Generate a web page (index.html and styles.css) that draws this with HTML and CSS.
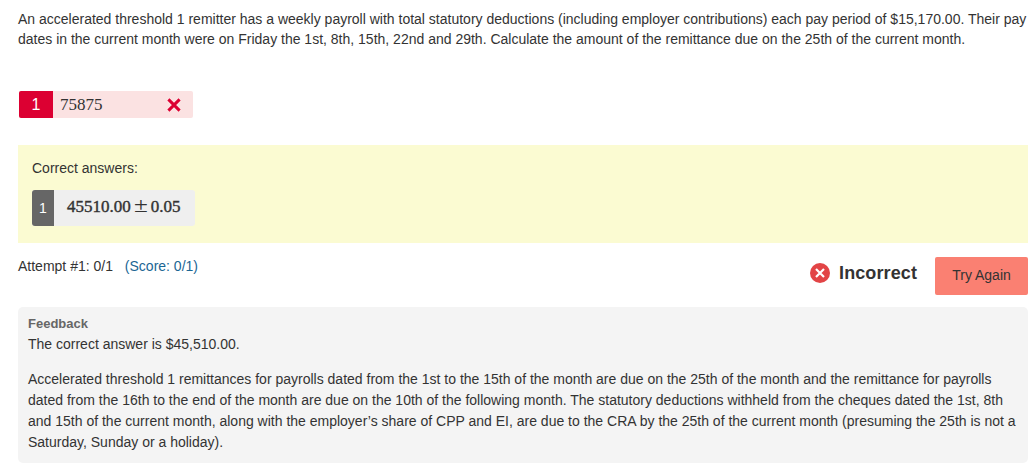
FILE: index.html
```html
<!DOCTYPE html>
<html lang="en">
<head>
  <meta charset="UTF-8" />
  <meta name="viewport" content="width=device-width, initial-scale=1.0"/>
  <title>Payroll Remittance Question</title>
  <link rel="stylesheet" href="styles.css">
</head>
<body>

  <div class="question">
    <p class="question-text">
      <span class="line">An accelerated threshold 1 remitter has a weekly payroll with total statutory deductions (including employer contributions) each pay period of $15,170.00. Their pay</span>
      <span class="line">dates in the current month were on Friday the 1st, 8th, 15th, 22nd and 29th. Calculate the amount of the remittance due on the 25th of the current month.</span>
    </p>

    <div class="response">
      <span class="response-number">1</span>
      <span class="response-value">75875</span>
      <svg class="cross" width="14" height="14" viewBox="0 0 14 14">
        <path d="M1.4 1.4L12.6 12.6M12.6 1.4L1.4 12.6" />
      </svg>
    </div>

    <div class="correct-answers">
      <div class="correct-title">Correct answers:</div>
      <div class="correct">
        <span class="correct-number">1</span>
        <span class="correct-value">45510.00<span class="plus-minus">±</span>0.05</span>
      </div>
    </div>

    <div class="result">
      <div class="attempt">Attempt #1: 0/1 <a class="score" href="#">(Score: 0/1)</a></div>
      <div class="grade">
        <svg class="grade-icon" width="20" height="20" viewBox="0 0 20 20">
          <circle cx="10" cy="10" r="10" />
          <path d="M6 6L14 14M14 6L6 14" />
        </svg>
        <span class="grade-text">Incorrect</span>
        <button type="button" class="try-again">Try Again</button>
      </div>
    </div>

    <div class="feedback">
      <h3>Feedback</h3>
      <p>The correct answer is $45,510.00.</p>
      <p>
        <span class="line">Accelerated threshold 1 remittances for payrolls dated from the 1st to the 15th of the month are due on the 25th of the month and the remittance for payrolls</span>
        <span class="line">dated from the 16th to the end of the month are due on the 10th of the following month. The statutory deductions withheld from the cheques dated the 1st, 8th</span>
        <span class="line">and 15th of the current month, along with the employer’s share of CPP and EI, are due to the CRA by the 25th of the current month (presuming the 25th is not a</span>
        <span class="line">Saturday, Sunday or a holiday).</span>
      </p>
    </div>
  </div>

</body>
</html>
```

FILE: styles.css
```css
body {
  margin: 0;
  background: #fff;
  color: #333;
  font-family: "Liberation Sans", Arial, sans-serif;
  font-size: 14px;
  line-height: 21px;
}

.question {
  padding: 9px 8px 0 18px;
}

.line {
  display: block;
  white-space: nowrap;
}

.question-text {
  margin: 0 0 42px;
  line-height: 20px;
}

.response {
  display: flex;
  align-items: center;
  width: 174px;
  height: 27px;
  margin-left: 1px;
  background: #fbe2e2;
  border-radius: 2px;
  overflow: hidden;
}

.response-number {
  width: 34px;
  line-height: 27px;
  background: #dc0032;
  color: #fff;
  font-size: 16px;
  text-align: center;
}

.response-value {
  flex: 1;
  padding-left: 7px;
  font-family: "Liberation Serif", serif;
  font-size: 17px;
}

.cross {
  margin-right: 12px;
  fill: none;
  stroke: #dc0032;
  stroke-width: 3;
}

.correct-answers {
  height: 85px;
  margin-top: 27px;
  padding: 13px 14px 0;
  background: #fbfbd2;
}

.correct {
  display: flex;
  width: 163px;
  height: 36px;
  margin-top: 11px;
  line-height: 36px;
  background: #efefef;
  border-radius: 3px;
}

.correct-number {
  width: 22px;
  background: #666;
  color: #fff;
  text-align: center;
  border-radius: 3px 0 0 3px;
}

.correct-value {
  padding-left: 13px;
  font-family: "Liberation Serif", serif;
  font-size: 17px;
  line-height: 34px;
  -webkit-text-stroke: 0.4px #333;
}

.plus-minus {
  display: inline-block;
  width: 20px;
  font-size: 21px;
  line-height: 20px;
  text-align: center;
  transform: scaleX(1.2);
  -webkit-text-stroke: 0;
}

.result {
  display: flex;
  justify-content: space-between;
  height: 64px;
  padding-top: 13px;
  box-sizing: border-box;
}

.score {
  margin-left: 8px;
  color: #1b6694;
  text-decoration: none;
}

.grade {
  display: flex;
  align-items: flex-start;
}

.grade-icon {
  margin-top: 7px;
  fill: #e24446;
}

.grade-icon path {
  stroke: #fff;
  stroke-width: 2.2;
}

.grade-text {
  margin: 7px 18px 0 9px;
  font-size: 18px;
  font-weight: bold;
  letter-spacing: 0.1px;
}

.try-again {
  width: 93px;
  height: 38px;
  margin-top: 1px;
  padding: 0 0 2px;
  border: none;
  border-radius: 2px;
  background: #fa8072;
  color: #333;
  font-family: inherit;
  font-size: 14px;
}

.feedback {
  height: 156px;
  padding: 6px 10px 0;
  box-sizing: border-box;
  background: #f4f4f4;
  border-radius: 5px;
}

.feedback h3 {
  margin: 0;
  color: #666;
  font-size: 13px;
}

.feedback p {
  margin: 0 0 14px;
}
```
